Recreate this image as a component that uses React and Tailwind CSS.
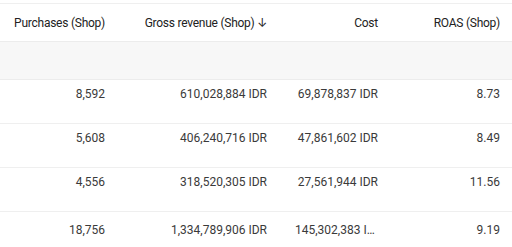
const rows = [
  ['8,592', '610,028,884 IDR', '69,878,837 IDR', '8.73'],
  ['5,608', '406,240,716 IDR', '47,861,602 IDR', '8.49'],
  ['4,556', '318,520,305 IDR', '27,561,944 IDR', '11.56'],
];

const total = ['18,756', '1,334,789,906 IDR', '145,302,383 IDR', '9.19'];

const grid = 'grid grid-cols-[117px_162px_111px_122px]';
const cell = 'min-w-0 truncate pl-4 pr-3 text-right first:overflow-visible first:pl-0';

export default function App() {
  return (
    <div
      className="h-[247px] w-[512px] overflow-hidden bg-white pt-[3px] text-[12px] text-[#3a3a3a]"
      style={{ fontFamily: 'Roboto, "Noto Sans", sans-serif' }}
    >
      <div className="border-t border-[#efefef]">
        <div className={`${grid} h-[38px] items-center border-b border-[#ececec] tracking-[-0.25px] text-[#222]`}>
          <div className={cell}>Purchases (Shop)</div>
          <div className={cell}>
            Gross revenue (Shop){' '}
            <span className="text-[12px]" style={{ fontFamily: 'Inter, sans-serif' }}>
              ↓
            </span>
          </div>
          <div className={cell}>Cost</div>
          <div className={cell}>ROAS (Shop)</div>
        </div>

        <div className="h-[38px] border-b border-[#ececec] bg-[#f7f7f7]" />

        {rows.map((row) => (
          <div key={row[0]} className={`${grid} h-[44px] items-start border-b border-[#efefef] pt-[4px] leading-5`}>
            {row.map((value, i) => (
              <div key={i} className={cell}>
                {value}
              </div>
            ))}
          </div>
        ))}

        <div className={`${grid} h-[37px] items-center border-b border-[#efefef]`}>
          {total.map((value, i) => (
            <div key={i} className={cell}>
              {value}
            </div>
          ))}
        </div>
      </div>
    </div>
  );
}
